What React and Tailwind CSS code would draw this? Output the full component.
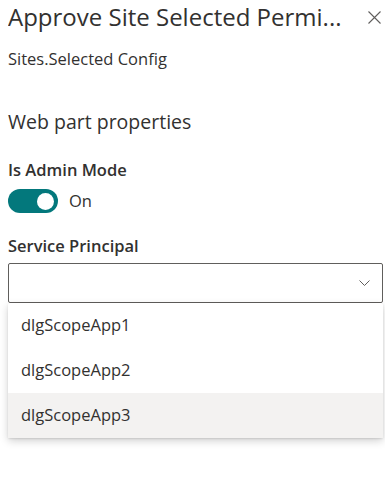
export default function App() {
  const options = ["dlgScopeApp1", "dlgScopeApp2", "dlgScopeApp3"];
  return (
    <div
      className="relative w-[385px] h-[477px] bg-white overflow-hidden text-[#323130]"
      style={{ fontFamily: '"Segoe UI", "Open Sans", sans-serif' }}
    >
      {/* Header */}
      <div className="flex items-center justify-between pl-2 pr-[4px] h-[34px]">
        <h1 className="text-[24px] leading-[34px] whitespace-nowrap overflow-hidden">
          Approve Site Selected Permi...
        </h1>
        <button className="w-[13px] h-[13px] flex items-center justify-center">
          <svg width="13" height="13" viewBox="0 0 13 13" fill="none">
            <path d="M0.5 0.5L12.5 12.5M12.5 0.5L0.5 12.5" stroke="#605e5c" strokeWidth="1.1" />
          </svg>
        </button>
      </div>

      <p className="px-2 mt-[12px] text-[16.5px] leading-[26px]">Sites.Selected Config</p>

      <div className="pl-2 pr-[2px] mt-[36px]">
        <h2 className="text-[19.5px] leading-[28px] font-normal">Web part properties</h2>

        <div className="mt-[21px]">
          <label className="block text-[16.5px] leading-[26px] font-semibold">Is Admin Mode</label>
          <div className="flex items-center gap-[11px] mt-[6px]">
            <div className="w-[50px] h-[24px] rounded-full bg-[#03787c] flex items-center justify-end pr-[4px]">
              <div className="w-[17px] h-[17px] rounded-full bg-white" />
            </div>
            <span className="text-[16.5px] leading-[24px]">On</span>
          </div>
        </div>

        <div className="mt-[20px]">
          <label className="block text-[16.5px] leading-[26px] font-semibold">Service Principal</label>
          <div className="mt-[4px] h-[40px] border border-[#605e5c] rounded-[2px] flex items-center justify-end pr-[12px]">
            <svg width="11" height="6" viewBox="0 0 11 6" fill="none">
              <path d="M0.5 0.5L5.5 5.5L10.5 0.5" stroke="#605e5c" strokeWidth="1" />
            </svg>
          </div>
        </div>
      </div>

      {/* Dropdown callout */}
      <div className="absolute left-[8px] top-[303px] w-[375px] bg-white shadow-[0_3px_8px_rgba(0,0,0,0.18),0_1px_2px_rgba(0,0,0,0.1)] rounded-[2px]">
        {options.map((o, i) => (
          <div
            key={o}
            className={`h-[45px] flex items-center pl-[13px] text-[16.5px] ${i === 2 ? "bg-[#f3f2f1]" : ""}`}
          >
            {o}
          </div>
        ))}
      </div>
    </div>
  );
}
